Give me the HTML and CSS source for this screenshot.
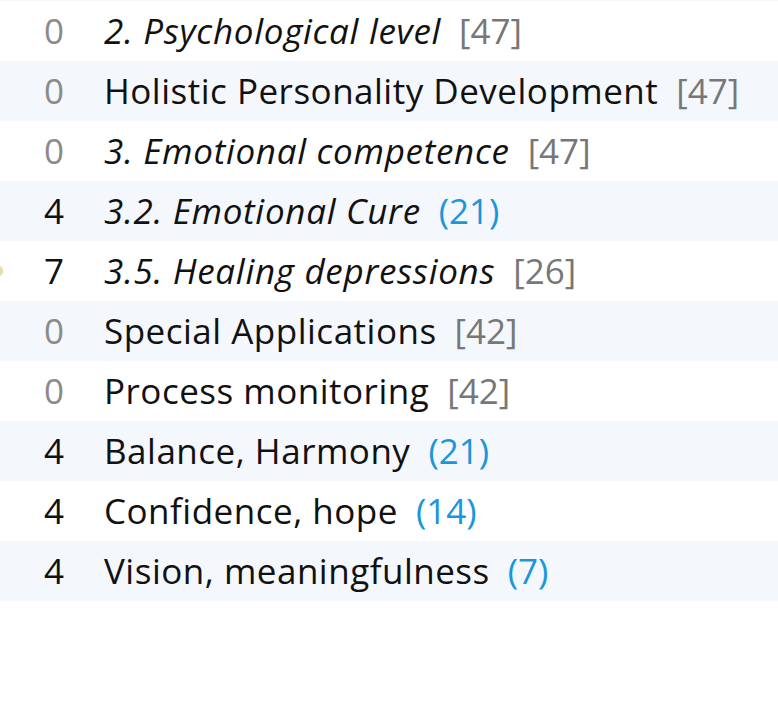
FILE: index.html
```html
<!DOCTYPE html>
<html>
<head>
<meta charset="utf-8">
<link rel="stylesheet" href="styles.css">
</head>
<body>
<div class="list">
  <div class="top-strip"></div>
  <div class="row"><span class="num muted">0</span><span class="title italic">2. Psychological level</span><span class="count grey">[47]</span></div>
  <div class="row alt"><span class="num muted">0</span><span class="title">Holistic Personality Development</span><span class="count grey">[47]</span></div>
  <div class="row"><span class="num muted">0</span><span class="title italic">3. Emotional competence</span><span class="count grey">[47]</span></div>
  <div class="row alt"><span class="num">4</span><span class="title italic">3.2. Emotional Cure</span><span class="count blue">(21)</span></div>
  <div class="row"><span class="edge-dot"></span><span class="num">7</span><span class="title italic">3.5. Healing depressions</span><span class="count grey">[26]</span></div>
  <div class="row alt"><span class="num muted">0</span><span class="title">Special Applications</span><span class="count grey">[42]</span></div>
  <div class="row"><span class="num muted">0</span><span class="title">Process monitoring</span><span class="count grey">[42]</span></div>
  <div class="row alt"><span class="num">4</span><span class="title">Balance, Harmony</span><span class="count blue">(21)</span></div>
  <div class="row"><span class="num">4</span><span class="title">Confidence, hope</span><span class="count blue">(14)</span></div>
  <div class="row alt"><span class="num">4</span><span class="title">Vision, meaningfulness</span><span class="count blue">(7)</span></div>
</div>
</body>
</html>
```
FILE: styles.css
```css
html, body {
  margin: 0;
  padding: 0;
  background: #ffffff;
}
body {
  font-family: "Open Sans", sans-serif;
  font-size: 35px;
  color: #111111;
}
.list {
  display: flex;
  flex-direction: column;
}
.top-strip {
  height: 1px;
  background: #f4f7fc;
}
.row {
  position: relative;
  display: flex;
  align-items: center;
  height: 60px;
  line-height: 60px;
  white-space: nowrap;
}
.row.alt {
  background: #f4f7fc;
}
.num {
  width: 64px;
  text-align: right;
  color: #111111;
}
.num.muted {
  color: #8a8a8a;
}
.title {
  margin-left: 40px;
  letter-spacing: 0.5px;
}
.title.italic {
  font-style: italic;
  letter-spacing: 0.7px;
}
.count {
  margin-left: 18px;
}
.count.grey {
  color: #777777;
}
.count.blue {
  color: #1a96dc;
}
.edge-dot {
  position: absolute;
  left: -4px;
  top: 25px;
  width: 7px;
  height: 10px;
  border-radius: 50%;
  background: #e8dcb0;
}
```
